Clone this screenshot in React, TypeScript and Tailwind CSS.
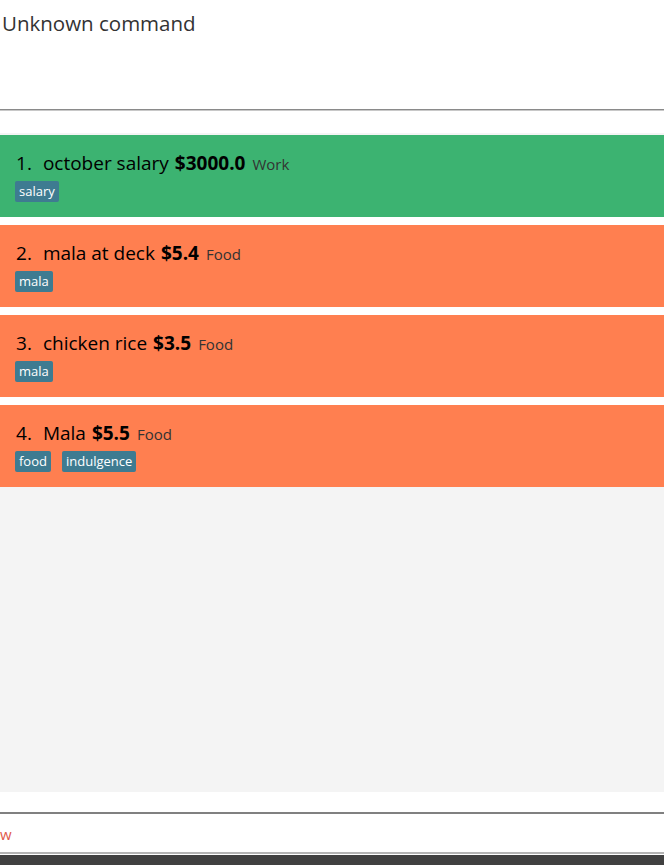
import React from "react";

type Expense = {
  name: string;
  amount: string;
  category: string;
  tags: string[];
  kind: "income" | "expense";
};

const expenses: Expense[] = [
  { name: "october salary", amount: "$3000.0", category: "Work", tags: ["salary"], kind: "income" },
  { name: "mala at deck", amount: "$5.4", category: "Food", tags: ["mala"], kind: "expense" },
  { name: "chicken rice", amount: "$3.5", category: "Food", tags: ["mala"], kind: "expense" },
  { name: "Mala", amount: "$5.5", category: "Food", tags: ["food", "indulgence"], kind: "expense" },
];

function ExpenseCard({ item, index }: { item: Expense; index: number }) {
  return (
    <div
      className={
        "h-[82px] px-4 pt-[15px] " +
        (item.kind === "income" ? "bg-[#3cb371]" : "bg-[#ff7f50]")
      }
    >
      <div className="flex items-baseline text-black">
        <span className="text-[19px] leading-[27px]">{index + 1}.</span>
        <span className="text-[19px] leading-[27px] ml-[11px]">{item.name}</span>
        <span className="text-[19px] leading-[27px] font-bold ml-[6px]">{item.amount}</span>
        <span className="text-[15px] text-[#333333] ml-[7px]">{item.category}</span>
      </div>
      <div className="flex gap-[11px] mt-[4px] -ml-px">
        {item.tags.map((tag) => (
          <span
            key={tag}
            className="bg-[#3e7b91] text-white text-[13px] leading-[21px] px-[4px] rounded-[2px]"
          >
            {tag}
          </span>
        ))}
      </div>
    </div>
  );
}

export default function App() {
  return (
    <div
      className="w-[664px] h-[865px] bg-white flex flex-col overflow-hidden"
      style={{ fontFamily: '"Open Sans", "Noto Sans", sans-serif' }}
    >
      <div className="h-[109px] px-[2px] pt-[8px] text-[20.5px] text-[#333333]">
        Unknown command
      </div>
      <div className="h-[2px] bg-[#8a8a8a] border-b border-[#c8c8c8]" />
      <div className="h-[22px]" />
      <div className="bg-[#f4f4f4] pt-[2px] h-[659px] flex flex-col">
        {expenses.map((item, i) => (
          <div key={i} className={i > 0 ? "bg-white pt-[8px]" : ""}>
            <ExpenseCard item={item} index={i} />
          </div>
        ))}
      </div>
      <div className="h-[20px]" />
      <div className="border-t-2 border-[#808080] border-b-2 border-b-[#b4b4b4] h-[42px] flex items-center">
        <span className="text-[15px] text-[#e05a4a] leading-none pt-[3px]">w</span>
      </div>
      <div className="h-[1px]" />
      <div className="flex-1 bg-[#404040]" />
    </div>
  );
}
